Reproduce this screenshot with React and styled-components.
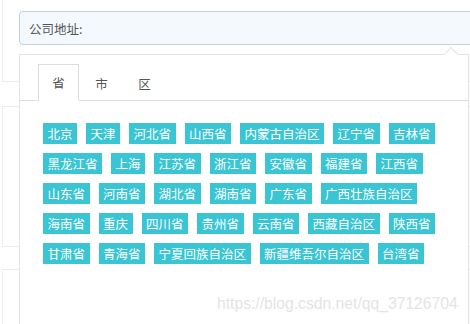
import React from "react";
import styled, { createGlobalStyle } from "styled-components";

const Global = createGlobalStyle`
  html, body { margin: 0; padding: 0; background: #fff; overflow: hidden; }
  body { font-family: "Noto Sans CJK SC", "Microsoft YaHei", sans-serif; }
  #root { width: 470px; height: 324px; position: relative; overflow: hidden; }
`;

const Page = styled.div`
  display: flex;
  flex-direction: column;
  padding-left: 2px;
  width: 520px;
`;

const Card = styled.div`
  box-sizing: border-box;
  border: 1px solid #ececec;
  border-top: ${(p) => (p.$openTop ? "none" : "1px solid #ececec")};
  border-bottom: ${(p) => (p.$openBottom ? "none" : "1px solid #ececec")};
  margin-top: ${(p) => p.$mt || 0}px;
  height: ${(p) => p.$h}px;
  padding: ${(p) => p.$pad || "0"};
`;

const Input = styled.div`
  box-sizing: border-box;
  height: 34px;
  width: 520px;
  background: #f4f9fd;
  border: 1px solid #c6ced7;
  border-radius: 4px;
  display: flex;
  align-items: center;
  padding-left: 9px;
  font-size: 12.5px;
  color: #555;
`;

const Popover = styled.div`
  position: absolute;
  left: 19px;
  top: 54px;
  width: 450px;
  height: 300px;
  box-sizing: border-box;
  background: #fff;
  border: 1px solid #e4e4e4;
  box-shadow: 1px 1px 2px rgba(0, 0, 0, 0.04);
`;

const Arrow = styled.div`
  position: absolute;
  top: -6px;
  right: 12px;
  width: 9px;
  height: 9px;
  background: #fff;
  border-left: 1px solid #e4e4e4;
  border-top: 1px solid #e4e4e4;
  transform: rotate(45deg);
`;

const TabBar = styled.div`
  display: flex;
  padding: 9px 0 0 18px;
  border-bottom: 1px solid #ddd;
`;

const Tab = styled.div`
  box-sizing: border-box;
  height: 37px;
  width: 41px;
  margin-right: 2px;
  margin-bottom: -1px;
  display: flex;
  align-items: center;
  justify-content: center;
  font-size: 12.5px;
  color: #555;
  border: 1px solid ${(p) => (p.$active ? "#ddd" : "transparent")};
  border-bottom: ${(p) => (p.$active ? "1px solid #fff" : "none")};
  background: ${(p) => (p.$active ? "#fff" : "transparent")};
`;

const TagPanel = styled.div`
  display: flex;
  flex-wrap: wrap;
  gap: 9px 9px;
  padding: 22px 20px 0 23px;
`;

const Tag = styled.span`
  display: inline-block;
  height: 21px;
  line-height: 21px;
  padding: 0 4.5px;
  background: #3ac5d4;
  color: #fff;
  font-size: 12.5px;
  white-space: nowrap;
`;

const Watermark = styled.div`
  position: absolute;
  left: 217px;
  top: 295px;
  font-family: "Liberation Sans", Arial, sans-serif;
  font-size: 15.7px;
  line-height: 18px;
  color: #e4e4e4;
  white-space: nowrap;
`;

const provinces = [
  "北京", "天津", "河北省", "山西省", "内蒙古自治区", "辽宁省", "吉林省",
  "黑龙江省", "上海", "江苏省", "浙江省", "安徽省", "福建省", "江西省",
  "山东省", "河南省", "湖北省", "湖南省", "广东省", "广西壮族自治区",
  "海南省", "重庆", "四川省", "贵州省", "云南省", "西藏自治区", "陕西省",
  "甘肃省", "青海省", "宁夏回族自治区", "新疆维吾尔自治区", "台湾省",
];

export default function App() {
  return (
    <>
      <Global />
      <Page>
        <Card $openTop $h={82} $pad="11px 0 0 16px">
          <Input>公司地址:</Input>
        </Card>
        <Card $mt={24} $h={141} />
        <Card $mt={22} $h={80} $openBottom />
      </Page>
      <Popover>
        <Arrow />
        <TabBar>
          <Tab $active>省</Tab>
          <Tab>市</Tab>
          <Tab>区</Tab>
        </TabBar>
        <TagPanel>
          {provinces.map((p) => (
            <Tag key={p}>{p}</Tag>
          ))}
        </TagPanel>
      </Popover>
      <Watermark>https://blog.csdn.net/qq_37126704</Watermark>
    </>
  );
}
